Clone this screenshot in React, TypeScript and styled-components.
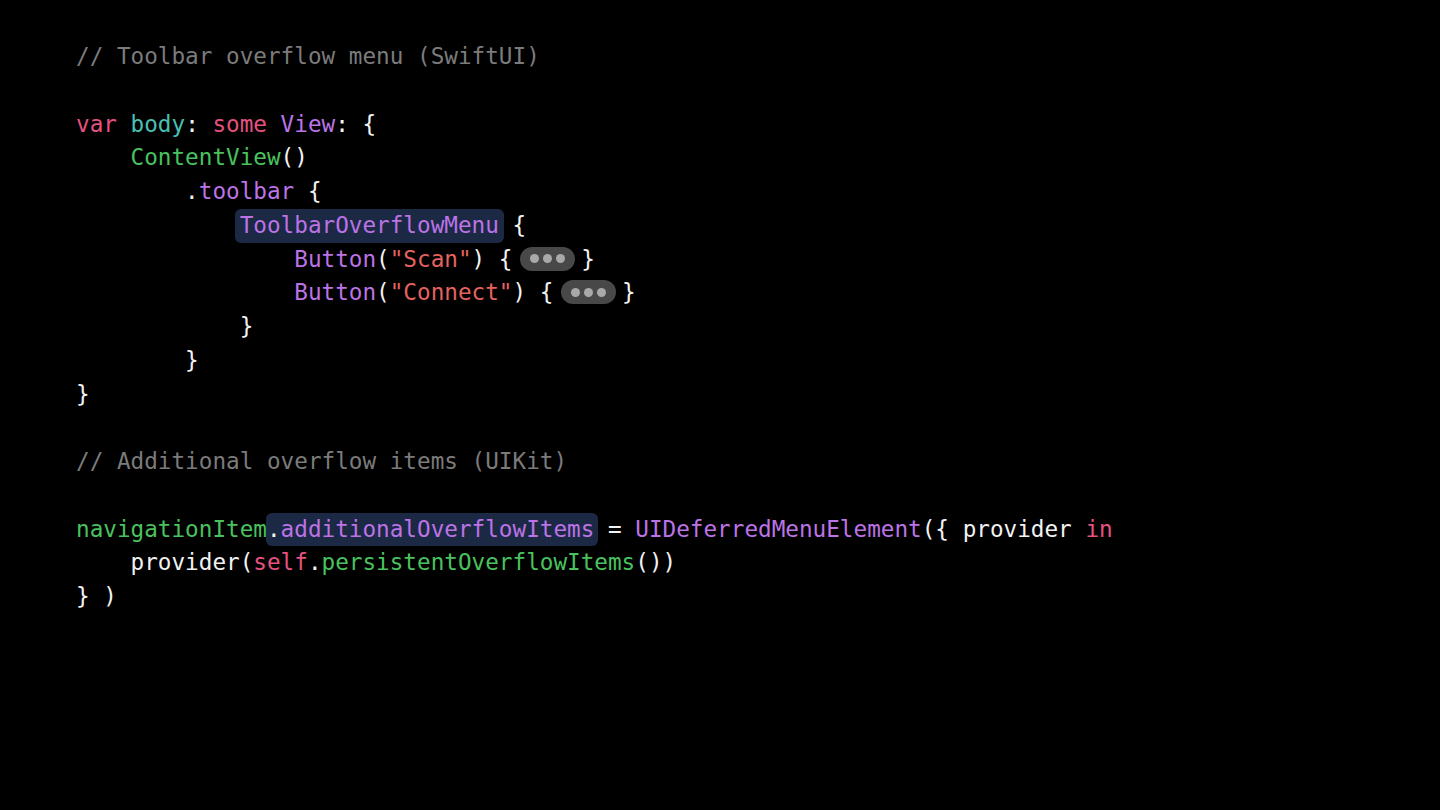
import React from "react";
import styled, { createGlobalStyle } from "styled-components";

const Global = createGlobalStyle`
  html, body { margin: 0; padding: 0; background: #000; }
  body { width: 1440px; height: 810px; overflow: hidden; }
`;

const C = {
  comment: "#7b7b7b",
  kw: "#e5527f",
  teal: "#48c0b4",
  purple: "#bb73e6",
  green: "#49c25e",
  str: "#e5635e",
  plain: "#f2f2f2",
};

type ToneKey = keyof typeof C;

const Page = styled.main`
  width: 1440px;
  height: 810px;
  background: #000;
  box-sizing: border-box;
  padding: 40px 0 0 76px;
`;

const Code = styled.div`
  font-family: "DejaVu Sans Mono", "Liberation Mono", monospace;
  font-size: 22.67px;
  line-height: 33.75px;
  color: ${C.plain};
`;

const Line = styled.div`
  height: 33.75px;
  white-space: pre;
`;

const Tok = styled.span<{ $tone: ToneKey }>`
  color: ${(p) => C[p.$tone]};
`;

const Highlight = styled.span<{ $padL: number; $padR: number }>`
  display: inline-block;
  vertical-align: top;
  background: #1b2944;
  border-radius: 6px;
  padding: 0 ${(p) => p.$padR}px 0 ${(p) => p.$padL}px;
  margin: 0 ${(p) => -p.$padR}px 0 ${(p) => -p.$padL}px;
  line-height: 33.75px;
`;

const Pill = styled.span`
  display: inline-flex;
  vertical-align: middle;
  align-items: center;
  justify-content: center;
  gap: 4px;
  width: 55px;
  height: 24px;
  border-radius: 12px;
  background: #484848;
  margin: -3px 6px 0 -6px;
`;

const Dot = styled.span`
  width: 9px;
  height: 9px;
  border-radius: 50%;
  background: #a9a9a9;
`;

const Dots = () => (
  <Pill>
    <Dot />
    <Dot />
    <Dot />
  </Pill>
);

export default function App() {
  return (
    <>
      <Global />
      <Page>
        <Code>
          <Line>
            <Tok $tone="comment">// Toolbar overflow menu (SwiftUI)</Tok>
          </Line>
          <Line> </Line>
          <Line>
            <Tok $tone="kw">var</Tok>{" "}<Tok $tone="teal">body</Tok>{": "}<Tok $tone="kw">some</Tok>{" "}
            <Tok $tone="purple">View</Tok>{": {"}
          </Line>
          <Line>
            {"    "}
            <Tok $tone="green">ContentView</Tok>()
          </Line>
          <Line>
            {"        ."}
            <Tok $tone="purple">toolbar</Tok>{" {"}
          </Line>
          <Line>
            {"            "}
            <Highlight $padL={5} $padR={5}>
              <Tok $tone="purple">ToolbarOverflowMenu</Tok>
            </Highlight>
            {" {"}
          </Line>
          <Line>
            {"                "}
            <Tok $tone="purple">Button</Tok>(<Tok $tone="str">"Scan"</Tok>){" { "}
            <Dots />
            {"}"}
          </Line>
          <Line>
            {"                "}
            <Tok $tone="purple">Button</Tok>(<Tok $tone="str">"Connect"</Tok>){" { "}
            <Dots />
            {"}"}
          </Line>
          <Line>{"            }"}</Line>
          <Line>{"        }"}</Line>
          <Line>{"}"}</Line>
          <Line> </Line>
          <Line>
            <Tok $tone="comment">// Additional overflow items (UIKit)</Tok>
          </Line>
          <Line> </Line>
          <Line>
            <Tok $tone="green">navigationItem</Tok>
            <Highlight $padL={1} $padR={4}>
              .<Tok $tone="purple">additionalOverflowItems</Tok>
            </Highlight>
            {" = "}
            <Tok $tone="purple">UIDeferredMenuElement</Tok>
            {"({ provider "}
            <Tok $tone="kw">in</Tok>
          </Line>
          <Line>
            {"    provider("}
            <Tok $tone="kw">self</Tok>.<Tok $tone="green">persistentOverflowItems</Tok>())
          </Line>
          <Line>{"} )"}</Line>
        </Code>
      </Page>
    </>
  );
}
